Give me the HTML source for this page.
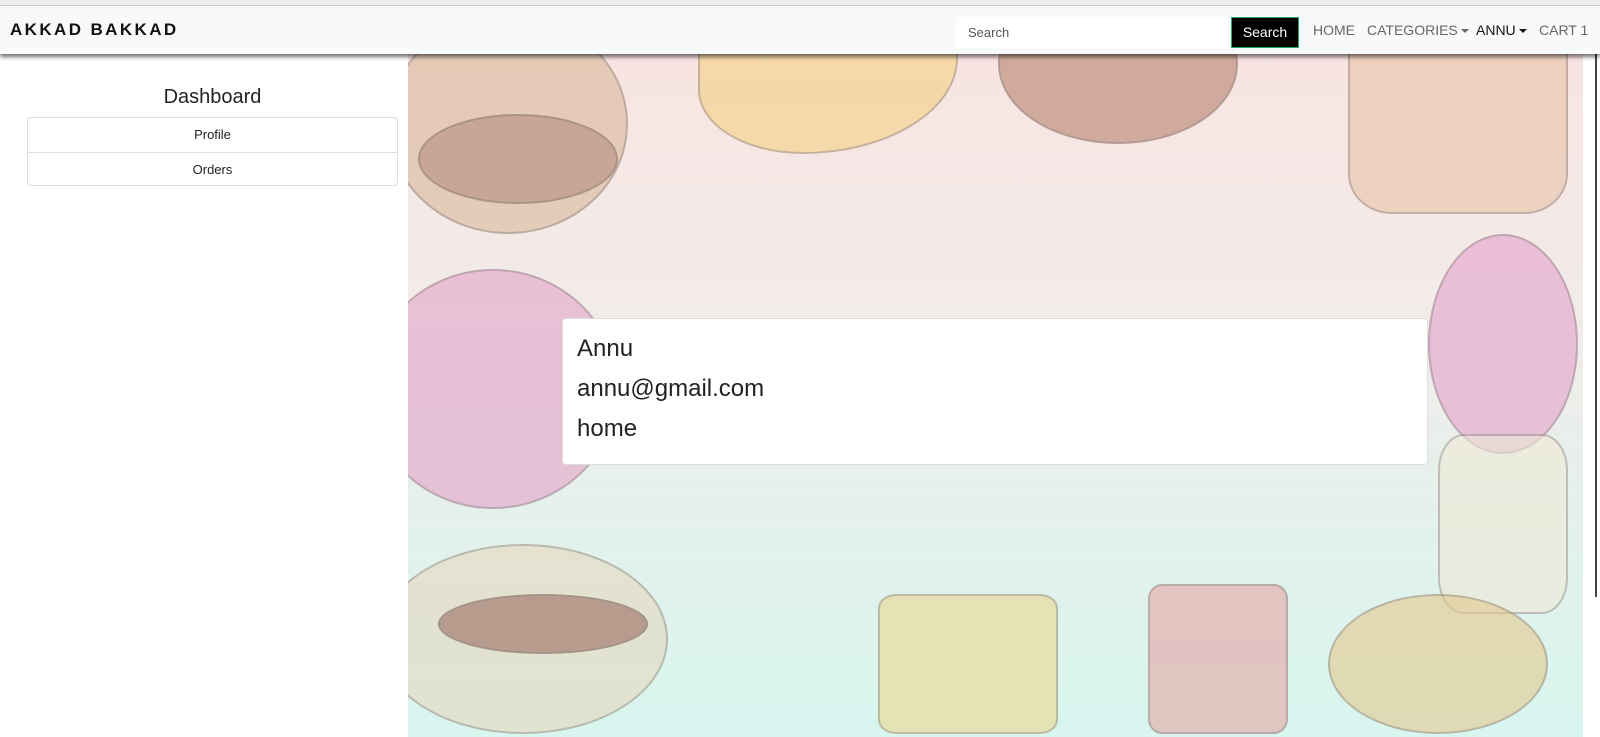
<!DOCTYPE html>
<html><head><meta charset="utf-8"><style>
*{box-sizing:border-box;margin:0;padding:0}
html,body{width:1600px;height:737px;overflow:hidden}
body{background:#fff;font-family:"Liberation Sans",sans-serif;position:relative}
.top{position:absolute;left:0;top:0;width:1600px;height:6px;background:#eceeef;border-bottom:1px solid #d0d0d0}
.nav{position:absolute;left:0;top:6px;width:1600px;height:48px;background:#f8f9fa;box-shadow:0 3px 4px rgba(0,0,0,.55);z-index:5}
.brand{position:absolute;left:10px;top:14px;font-weight:bold;font-size:17px;letter-spacing:2.4px;color:#111}
.sin{position:absolute;left:956px;top:11px;width:272px;height:31px;background:#fff;font-size:13px;color:#555;padding:8px 12px}
.sbtn{position:absolute;left:1231px;top:11px;width:68px;height:31px;background:#000;border:1px solid #2a6;color:#fff;font-size:14px;text-align:center;line-height:29px}
.lk{position:absolute;top:16px;font-size:14px;color:#666}
.car{display:inline-block;border-left:4px solid transparent;border-right:4px solid transparent;border-top:4px solid currentColor;vertical-align:middle;margin-left:3px}
.side{position:absolute;left:0;top:54px;width:408px;height:683px;background:#fff;overflow:hidden}
.side h2{position:absolute;left:0;width:425px;top:32px;text-align:center;font-weight:normal;font-size:20px;color:#222}
.list{position:absolute;left:27px;top:63px;width:371px;height:69px;border:1px solid #ddd;border-radius:4px}
.list div{height:34px;text-align:center;font-size:13px;color:#222;line-height:34px}
.list div+div{border-top:1px solid #ddd}
.bg{position:absolute;left:408px;top:54px;width:1175px;height:683px;background:linear-gradient(#f8e4e2 0%,#f1ece9 40%,#e3f1ec 70%,#d8f5ef 100%);overflow:hidden}
.b{position:absolute;border-radius:50%;border:2px solid rgba(90,80,80,.5);opacity:.6}
.card{position:absolute;left:562px;top:318px;width:866px;height:147px;background:#fff;border:1px solid #ddd;border-radius:4px;padding:10px 14px;font-size:24px;color:#222;z-index:3}
.card p{height:40px;line-height:40px}
.sb{position:absolute;left:1595px;top:20px;width:2px;height:577px;background:#444}
</style></head><body>
<div class="top"></div>
<div class="nav">
<div class="brand">AKKAD BAKKAD</div>
<div class="sin">Search</div>
<div class="sbtn">Search</div>
<span class="lk" style="left:1313px">HOME</span>
<span class="lk" style="left:1367px">CATEGORIES<span class="car"></span></span>
<span class="lk" style="left:1476px;color:#111">ANNU<span class="car"></span></span>
<span class="lk" style="left:1539px">CART 1</span>
</div>
<div class="side"><h2>Dashboard</h2>
<div class="list"><div>Profile</div><div>Orders</div></div></div>
<div class="bg">
<div class="b" style="left:-20px;top:-40px;width:240px;height:220px;background:#d9b99a"></div>
<div class="b" style="left:10px;top:60px;width:200px;height:90px;background:#b58f80"></div>
<div class="b" style="left:290px;top:-60px;width:260px;height:160px;background:#f5d184;border-radius:0 0 60% 40%"></div>
<div class="b" style="left:590px;top:-70px;width:240px;height:160px;background:#b8836f"></div>
<div class="b" style="left:940px;top:-40px;width:220px;height:200px;background:#e9c3a8;border-radius:20%"></div>
<div class="b" style="left:-40px;top:215px;width:250px;height:240px;background:#e4a3c8"></div>
<div class="b" style="left:1020px;top:180px;width:150px;height:220px;background:#e4a1cc"></div>
<div class="b" style="left:1030px;top:380px;width:130px;height:180px;background:#eee9d6;border-radius:20%"></div>
<div class="b" style="left:-30px;top:490px;width:290px;height:190px;background:#e6d8bd"></div>
<div class="b" style="left:30px;top:540px;width:210px;height:60px;background:#9b6f63"></div>
<div class="b" style="left:470px;top:540px;width:180px;height:140px;background:#ecd890;border-radius:10%"></div>
<div class="b" style="left:740px;top:530px;width:140px;height:150px;background:#e5a6a4;border-radius:10%"></div>
<div class="b" style="left:920px;top:540px;width:220px;height:140px;background:#e4c98f"></div>
</div>
<div class="card"><p>Annu</p><p>annu@gmail.com</p><p>home</p></div>
<div class="sb"></div>
</body></html>
